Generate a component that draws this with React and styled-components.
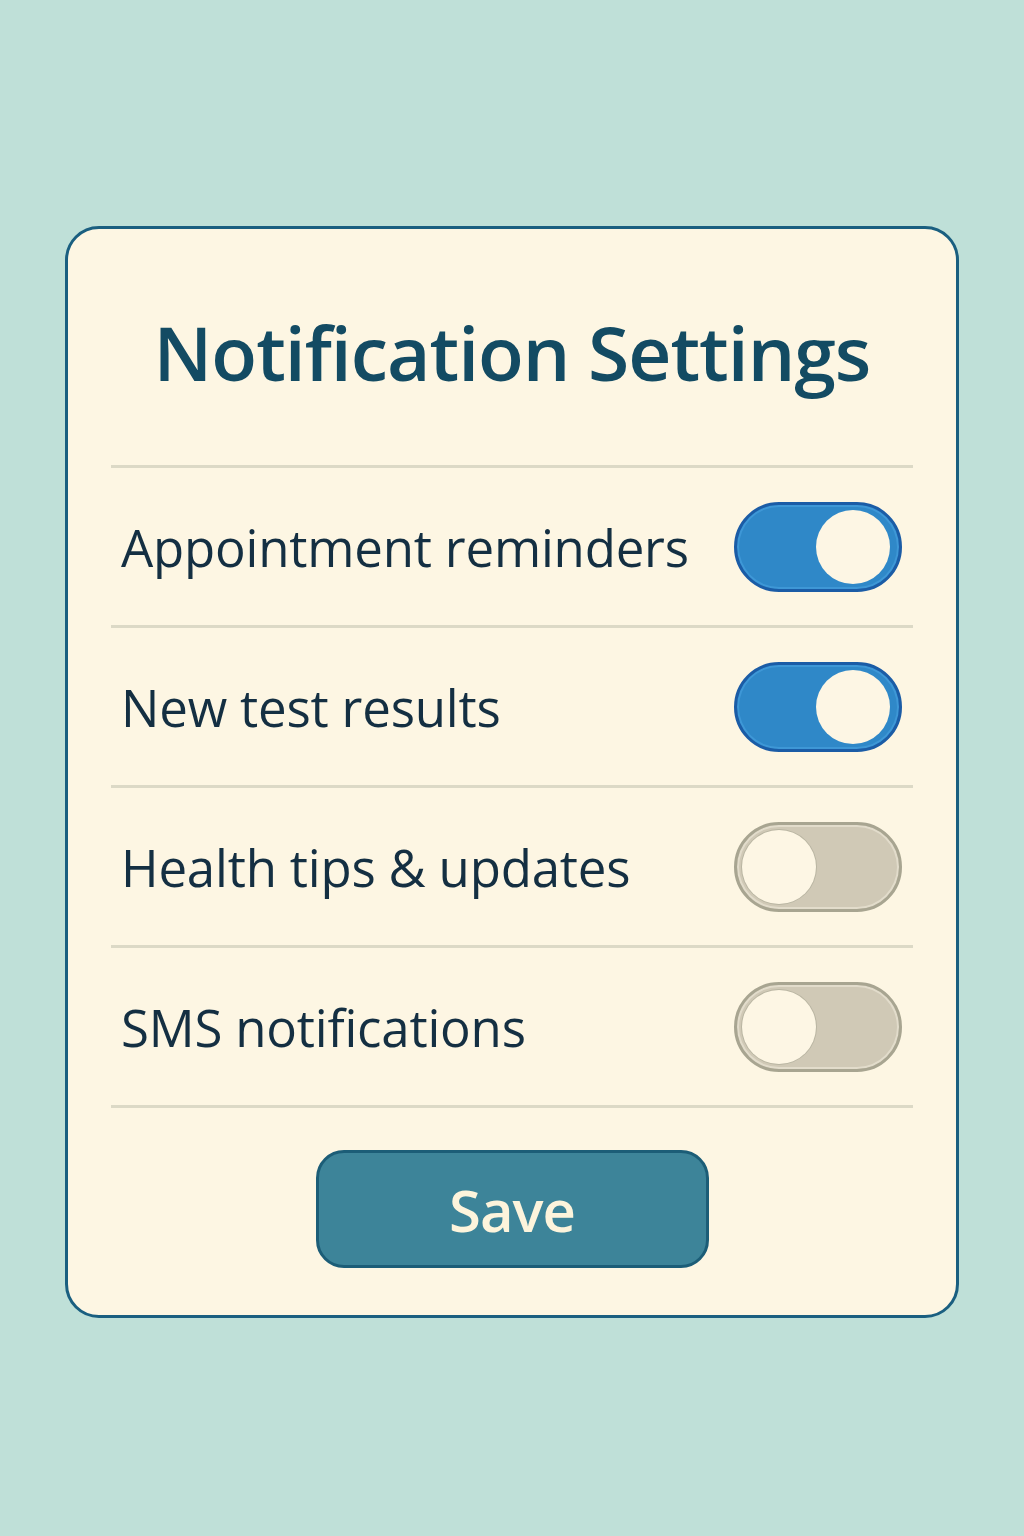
import React, { useState } from 'react';
import styled, { createGlobalStyle } from 'styled-components';

const GlobalStyle = createGlobalStyle`
  body {
    margin: 0;
    background: #bfe0d8;
    font-family: 'Open Sans', 'Noto Sans', sans-serif;
  }
`;

const settings = [
  { id: 'appointments', label: 'Appointment reminders', on: true },
  { id: 'results', label: 'New test results', on: true },
  { id: 'tips', label: 'Health tips & updates', on: false },
  { id: 'sms', label: 'SMS notifications', on: false },
];

const App = () => {
  const [values, setValues] = useState(
    Object.fromEntries(settings.map(s => [s.id, s.on]))
  );

  const toggle = (id) => setValues(v => ({ ...v, [id]: !v[id] }));

  return (
    <>
      <GlobalStyle />
      <Page>
        <Card>
          <Title>Notification Settings</Title>
          <List>
            {settings.map(s => (
              <Row key={s.id}>
                <Label>{s.label}</Label>
                <Switch
                  type='button'
                  role='switch'
                  aria-checked={values[s.id]}
                  on={values[s.id] ? 1 : 0}
                  onClick={() => toggle(s.id)}
                >
                  <Knob on={values[s.id] ? 1 : 0} />
                </Switch>
              </Row>
            ))}
          </List>
          <Footer>
            <SaveBtn type='button'>Save</SaveBtn>
          </Footer>
        </Card>
      </Page>
    </>
  );
};

export default App;

const Page = styled.div`
  min-height: 1536px;
  box-sizing: border-box;
  padding-top: 226px;
  display: flex;
  justify-content: center;
  align-items: flex-start;
`;

const Card = styled.div`
  width: 894px;
  height: 1092px;
  box-sizing: border-box;
  background: #fdf6e3;
  border: 3px solid #1a5f80;
  border-radius: 34px;
  padding: 0 43px;
  display: flex;
  flex-direction: column;
`;

const Title = styled.h1`
  margin: 0;
  height: 236px;
  box-sizing: border-box;
  padding-top: 86px;
  text-align: center;
  font-size: 75px;
  font-weight: 600;
  letter-spacing: -1px;
  color: #134b63;
  line-height: 1;
`;

const List = styled.div`
  display: flex;
  flex-direction: column;
  border-top: 3px solid #dcd9c6;
`;

const Row = styled.div`
  height: 157px;
  display: flex;
  align-items: center;
  justify-content: space-between;
  padding: 0 11px 0 10px;
  border-bottom: 3px solid #dcd9c6;
`;

const Label = styled.span`
  font-size: 51px;
  color: #142f42;
  letter-spacing: -0.2px;
`;

const Switch = styled.button`
  position: relative;
  width: 168px;
  height: 90px;
  box-sizing: border-box;
  padding: 0;
  cursor: pointer;
  border-radius: 45px;
  border: 3px solid ${p => p.on ? '#1b5ca6' : '#a8a591'};
  background: ${p => p.on ? '#2f88c8' : '#d0c9b6'};
  box-shadow: inset 0 0 0 2px ${p => p.on ? '#3e97d6' : '#e2dccb'};
`;

const Knob = styled.span`
  position: absolute;
  top: 5px;
  left: ${p => p.on ? '79px' : '5px'};
  width: 74px;
  height: 74px;
  border-radius: 50%;
  background: #fdf6e4;
  box-shadow: ${p => p.on ? 'none' : '0 0 0 1px #b9b5a2'};
`;

const Footer = styled.div`
  flex: 1;
  display: flex;
  justify-content: center;
  padding-top: 42px;
`;

const SaveBtn = styled.button`
  width: 393px;
  height: 118px;
  box-sizing: border-box;
  border-radius: 28px;
  border: 3px solid #1c5d77;
  background: #3d8499;
  color: #fdf4dc;
  font-family: 'Open Sans', 'Noto Sans', sans-serif;
  font-size: 58px;
  font-weight: 600;
  letter-spacing: -1px;
  cursor: pointer;
`;
